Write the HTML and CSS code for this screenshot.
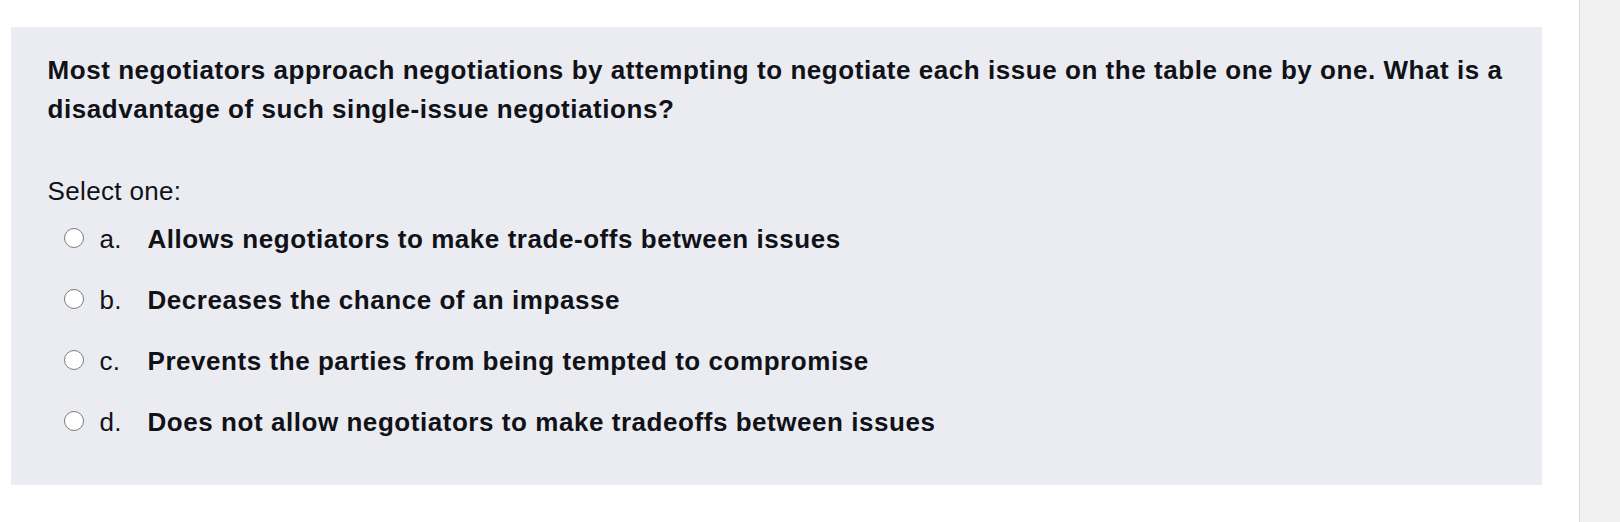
FILE: index.html
```html
<!DOCTYPE html>
<html lang="en">
<head>
  <meta charset="UTF-8">
  <title>Question</title>
  <link rel="stylesheet" href="styles.css">
</head>
<body>

<div class="page">
  <div class="content">
    <div class="question">
      <div class="qtext">Most negotiators approach negotiations by attempting to negotiate each issue on the table one by one. What is a disadvantage of such single-issue negotiations?</div>

      <div class="prompt">Select one:</div>

      <div class="answer">
        <label class="option">
          <span class="radio"></span>
          <span class="letter">a.</span>
          <span class="label">Allows negotiators to make trade-offs between issues</span>
        </label>
        <label class="option">
          <span class="radio"></span>
          <span class="letter">b.</span>
          <span class="label">Decreases the chance of an impasse</span>
        </label>
        <label class="option">
          <span class="radio"></span>
          <span class="letter">c.</span>
          <span class="label">Prevents the parties from being tempted to compromise</span>
        </label>
        <label class="option">
          <span class="radio"></span>
          <span class="letter">d.</span>
          <span class="label">Does not allow negotiators to make tradeoffs between issues</span>
        </label>
      </div>
    </div>
  </div>

  <!-- scrollbar gutter on the right -->
  <div class="sidebar"></div>
</div>

</body>
</html>
```

FILE: styles.css
```css
body {
  margin: 0;
  font-family: "Liberation Sans", Arial, sans-serif;
  background: #ffffff;
  color: #101218;
}
.page {
  display: flex;
  height: 522px;
}
.content {
  flex: 1;
  padding: 27px 0 0 11px;
}
.sidebar {
  width: 40px;
  background: #f0f0f0;
  border-left: 1px solid #dcdcdc;
}
.question {
  width: 1531px;
  height: 458px;
  box-sizing: border-box;
  background: #ebecf1;
  padding: 24px 20px 0 36.5px;
  font-size: 26px;
  line-height: 39px;
  letter-spacing: 0.35px;
}
.qtext {
  font-weight: bold;
  letter-spacing: 0.55px;
}
.prompt {
  margin-top: 43px;
}
.option {
  display: flex;
  align-items: center;
  padding: 8.5px 0 13.5px 0;
  cursor: pointer;
}
.radio {
  width: 18px;
  height: 18px;
  margin: 0 16px 0 16px;
  border: 1.5px solid #7b7b7b;
  border-radius: 50%;
  background: #ffffff;
  position: relative;
  top: -1px;
}
.letter {
  min-width: 48px;
}
.label {
  font-weight: bold;
  letter-spacing: 0.55px;
}
```
